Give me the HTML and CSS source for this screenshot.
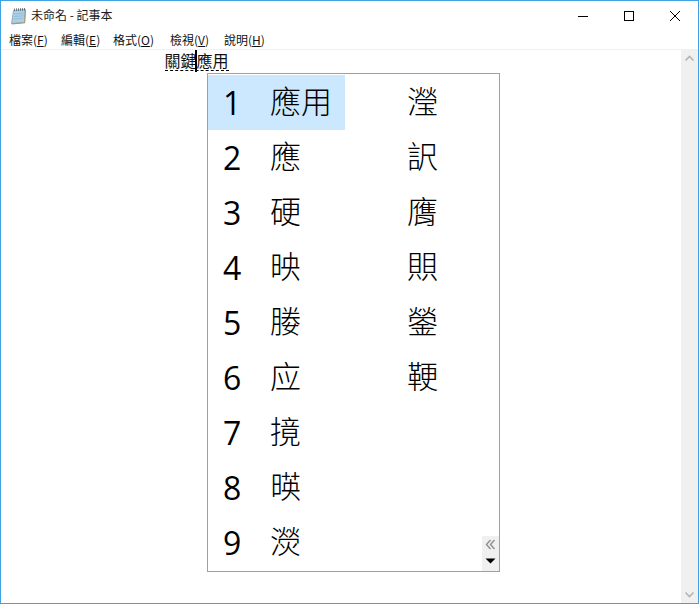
FILE: index.html
```html
<!DOCTYPE html>
<html lang="zh-Hant">
<head>
<meta charset="utf-8">
<title>未命名 - 記事本</title>
<link rel="stylesheet" href="styles.css">
</head>
<body>
<div class="window">
  <header class="titlebar">
    <svg class="app-icon" width="17" height="18" viewBox="0 0 17 18">
      <path d="M3.5 3.5 15.5 2.5 14.5 15.5 1.5 16.5Z" fill="#a9d0e8" stroke="#8aa0ae" stroke-width=".8"/>
      <path d="M4 7 13.5 6.3M3.8 9.5 13.5 8.8M3.5 12 13.3 11.3" stroke="#8db6d0" stroke-width=".7"/>
      <path d="M15.4 3 14.6 15.8 1.8 16.9" fill="none" stroke="#a89a78" stroke-width="1.1"/>
      <path d="M4.5 1.5v2.6M6.5 1.4V4M8.5 1.3v2.6M10.5 1.2v2.6M12.5 1.1v2.6M14.5 1v2.6" stroke="#5c6a74" stroke-width=".9"/>
    </svg>
    <span class="title">未命名 - 記事本</span>
    <div class="controls">
      <button class="ctl"><svg width="12" height="12" viewBox="0 0 12 12"><path d="M1 6.5h10" stroke="#000" fill="none"/></svg></button>
      <button class="ctl"><svg width="12" height="12" viewBox="0 0 12 12"><rect x="1.5" y="1.5" width="9" height="9" stroke="#000" fill="none"/></svg></button>
      <button class="ctl"><svg width="12" height="12" viewBox="0 0 12 12"><path d="M1 1l10 10M11 1 1 11" stroke="#000" fill="none"/></svg></button>
    </div>
  </header>
  <nav class="menubar">
    <span>檔案(<u>F</u>)</span>
    <span>編輯(<u>E</u>)</span>
    <span>格式(<u>O</u>)</span>
    <span>檢視(<u>V</u>)</span>
    <span>說明(<u>H</u>)</span>
  </nav>
  <main class="workspace">
    <div class="editor">
      <span class="compose">關鍵<i class="caret"></i>應用</span>
    </div>
    <div class="scrollbar">
      <svg width="17" height="17" viewBox="0 0 17 17"><path d="M4.5 10.5 8.5 6.5 12.5 10.5" fill="none" stroke="#b4b4b4" stroke-width="1.6"/></svg>
      <svg width="17" height="17" viewBox="0 0 17 17"><path d="M4.5 6.5 8.5 10.5 12.5 6.5" fill="none" stroke="#b4b4b4" stroke-width="1.6"/></svg>
    </div>
    <div class="candidates">
      <ol class="col col-main">
        <li class="cand selected"><span class="num">1</span><span class="word">應用</span></li>
        <li class="cand"><span class="num">2</span><span class="word">應</span></li>
        <li class="cand"><span class="num">3</span><span class="word">硬</span></li>
        <li class="cand"><span class="num">4</span><span class="word">映</span></li>
        <li class="cand"><span class="num">5</span><span class="word">媵</span></li>
        <li class="cand"><span class="num">6</span><span class="word">应</span></li>
        <li class="cand"><span class="num">7</span><span class="word">摬</span></li>
        <li class="cand"><span class="num">8</span><span class="word">暎</span></li>
        <li class="cand"><span class="num">9</span><span class="word">濙</span></li>
      </ol>
      <ul class="col col-more">
        <li class="cand"><span class="word">瀅</span></li>
        <li class="cand"><span class="word">訳</span></li>
        <li class="cand"><span class="word">膺</span></li>
        <li class="cand"><span class="word">賏</span></li>
        <li class="cand"><span class="word">鎣</span></li>
        <li class="cand"><span class="word">鞕</span></li>
      </ul>
      <div class="pager">
        <svg width="17" height="17" viewBox="0 0 17 17"><path d="M8.5 4 4.5 8.5 8.5 13M12.5 4 8.5 8.5 12.5 13" fill="none" stroke="#8f8f8f" stroke-width="1.4"/></svg>
        <svg width="17" height="17" viewBox="0 0 17 17"><path d="M3.5 5.5h10L8.5 10.5Z" fill="#000"/></svg>
      </div>
    </div>
  </main>
</div>
</body>
</html>
```
FILE: styles.css
```css
* { box-sizing: border-box; }
html, body { margin: 0; height: 100%; overflow: hidden; }
body {
  background: #fff;
  color: #000;
  font-family: "Noto Sans CJK TC", "Noto Sans", sans-serif;
}
.window {
  width: 699px;
  height: 604px;
  border: 1px solid #3fa3e3;
  display: flex;
  flex-direction: column;
}
.titlebar {
  height: 29px;
  flex: none;
  display: flex;
  align-items: center;
  padding-left: 9px;
}
.app-icon { flex: none; margin-right: 4px; }
.title { font-size: 12px; line-height: 16px; margin-top: -2px; color: #1a1a1a; }
.controls { margin-left: auto; display: flex; }
.ctl {
  width: 46px;
  height: 29px;
  border: 0;
  padding: 0;
  background: none;
  display: flex;
  align-items: center;
  justify-content: center;
}
.menubar {
  height: 20px;
  flex: none;
  display: grid;
  grid-template-columns: 52px 52px 57px 54px auto;
  padding-left: 8px;
  font-size: 12px;
  line-height: 20px;
  color: #111;
  border-bottom: 1px solid #f0f0f0;
}
.menubar u { text-underline-offset: 1px; }
.workspace {
  flex: 1;
  min-height: 0;
  display: flex;
  position: relative;
}
.editor {
  flex: 1;
  padding: 0 0 0 163.5px;
  font-size: 16px;
  line-height: 20px;
  color: #111;
}
.compose {
  display: inline-block;
  position: relative;
  width: 64px;
  height: 21px;
  border-bottom: 1px dashed #000;
  white-space: nowrap;
}
.caret {
  position: absolute;
  left: 30px;
  top: 0;
  width: 2px;
  height: 22px;
  background: #000;
}
.scrollbar {
  width: 17px;
  flex: none;
  background: #f0f0f0;
  display: flex;
  flex-direction: column;
  justify-content: space-between;
}
.scrollbar svg { display: block; }
.candidates {
  position: absolute;
  left: 206px;
  top: 23px;
  width: 293px;
  height: 499px;
  padding: 1px 0;
  background: #fff;
  border: 1px solid #a0a0a0;
  display: flex;
}
.col { list-style: none; margin: 0; padding: 0; }
.col-main { width: 137px; flex: none; }
.col-more { flex: 1; padding-left: 62px; }
.cand {
  height: 55px;
  display: flex;
  align-items: center;
  line-height: 55px;
}
.selected { background: #cce8ff; }
.num {
  width: 62px;
  flex: none;
  padding-left: 15px;
  margin-top: -1px;
  font-family: "Open Sans", "Noto Sans", sans-serif;
  font-size: 32px;
  color: #000;
}
.word {
  font-size: 31px;
  font-weight: 300;
  margin-top: -6px;
  color: #000;
  white-space: nowrap;
}
.pager {
  position: absolute;
  right: 0;
  bottom: 0;
  width: 17px;
  height: 35px;
  background: #f0f0f0;
}
.pager svg { display: block; }
```
